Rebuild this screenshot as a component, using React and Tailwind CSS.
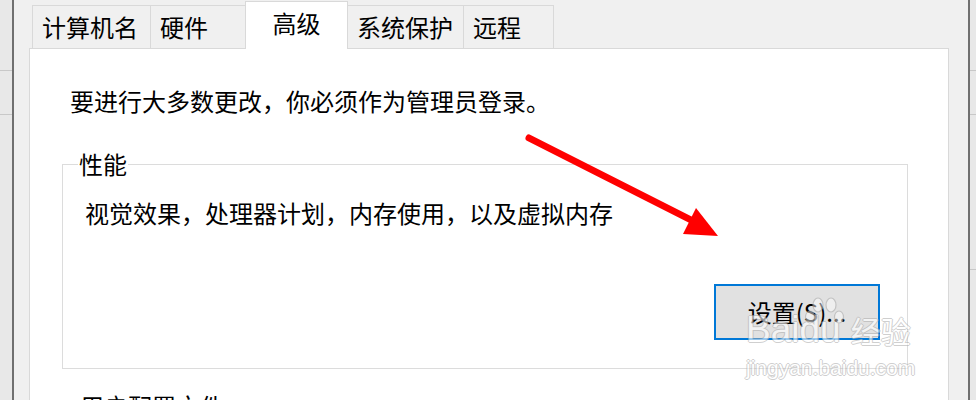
import React from "react";

const font = { fontFamily: '"Noto Sans CJK SC", "Noto Sans", sans-serif' };

function Tab({ label, width, active }) {
  if (active) {
    return (
      <div
        className={`relative z-10 -mb-px -ml-px flex h-[48px] items-center justify-center border border-b-0 border-[#d9d9d9] bg-white pb-[6px] ${width}`}
      >
        {label}
      </div>
    );
  }
  return (
    <div
      className={`-ml-px flex h-[43px] items-center border border-b-0 border-[#d9d9d9] bg-[#f0f0f0] pl-[9px] ${width}`}
    >
      {label}
    </div>
  );
}

function SideStrip({ lines }) {
  return (
    <div className="flex h-full w-full flex-col bg-[#e8e8e8]">
      {lines.map((h, i) => (
        <div key={i} className={`${h} shrink-0 border-b border-[#c8c8c8]`} />
      ))}
    </div>
  );
}

export default function App() {
  return (
    <div
      className="relative flex h-[400px] w-[976px] overflow-hidden bg-[#f0f0f0] text-[24px] leading-[32px] text-black"
      style={font}
    >
      {/* left strip */}
      <div className="h-full w-[12px] shrink-0">
        <SideStrip lines={["h-[71px]", "h-[44px]"]} />
      </div>
      <div className="h-full w-[2px] shrink-0 bg-[#707070]" />

      {/* middle dialog area */}
      <div className="flex h-full w-[954px] shrink-0 flex-col pl-[15px] pr-[19px]">
        <div className="flex h-[48px] shrink-0 items-end pl-[4px]">
          <Tab label="计算机名" width="w-[119px]" />
          <Tab label="硬件" width="w-[96px]" />
          <Tab label="高级" width="w-[103px]" active />
          <Tab label="系统保护" width="w-[117px]" />
          <Tab label="远程" width="w-[91px]" />
        </div>

        <div className="flex flex-1 flex-col border border-b-0 border-[#d9d9d9] bg-white">
          <div className="mt-[36px] h-[32px] pl-[40px]">
            要进行大多数更改，你必须作为管理员登录。
          </div>

          <div className="relative ml-[32px] mt-[47px] flex h-[205px] w-[846px] shrink-0 flex-col border border-[#dcdcdc]">
            <span className="absolute left-[15px] top-[-17px] bg-white px-[1px]">
              性能
            </span>
            <div className="mt-[32px] h-[32px] pl-[22px]">
              视觉效果，处理器计划，内存使用，以及虚拟内存
            </div>
            <div className="mt-[55px] flex justify-end pr-[27px]">
              <button
                className="flex h-[56px] w-[166px] items-center justify-center border-2 border-[#0078d7] bg-[#e1e1e1] text-[24px]"
                style={font}
              >
                设置(S)...
              </button>
            </div>
          </div>

          <div className="mt-[21px] h-[32px] pl-[50px]">用户配置文件</div>
        </div>
      </div>

      {/* right strip */}
      <div className="h-full w-[2px] shrink-0 bg-[#707070]" />
      <div className="h-full w-[6px] shrink-0">
        <SideStrip lines={["h-[71px]", "h-[44px]", "h-[155px]"]} />
      </div>

      {/* red arrow annotation */}
      <svg
        className="pointer-events-none absolute left-0 top-0"
        width="976"
        height="400"
        viewBox="0 0 976 400"
      >
        <line
          x1="529"
          y1="138"
          x2="697"
          y2="223"
          stroke="#ff0000"
          strokeWidth="7"
          strokeLinecap="round"
        />
        <polygon points="696,208 718,236 683,234" fill="#ff0000" />
      </svg>

      {/* watermark */}
      <div className="pointer-events-none absolute left-[746px] top-[308px] flex flex-col text-white opacity-60">
        <div
          className="relative flex items-end"
          style={{ fontFamily: '"Liberation Sans", "Noto Sans CJK SC", sans-serif' }}
        >
          <span className="text-[37px] leading-[44px] [text-shadow:1px_0_#b0b0b0,-1px_0_#b0b0b0,0_1px_#b0b0b0,0_-1px_#b0b0b0]">
            Bai
          </span>
          <span className="relative text-[37px] leading-[44px] [text-shadow:1px_0_#b0b0b0,-1px_0_#b0b0b0,0_1px_#b0b0b0,0_-1px_#b0b0b0]">
            du
            <svg
              className="absolute left-[6px] top-[-12px]"
              width="40"
              height="44"
              viewBox="0 0 40 44"
            >
              <g fill="#ffffff" fillOpacity="0.8" stroke="#b0b0b0" strokeWidth="1.2">
                <ellipse cx="13" cy="9" rx="5" ry="7" />
                <ellipse cx="26" cy="9" rx="5" ry="7" />
                <ellipse cx="5" cy="21" rx="4.5" ry="6" />
                <ellipse cx="34" cy="21" rx="4.5" ry="6" />
              </g>
            </svg>
          </span>
          <span
            className="ml-[10px] text-[30px] leading-[44px] [text-shadow:1px_0_#b0b0b0,-1px_0_#b0b0b0,0_1px_#b0b0b0,0_-1px_#b0b0b0]"
            style={font}
          >
            经验
          </span>
        </div>
        <div
          className="mt-[4px] text-[21px] leading-[24px] [text-shadow:1px_0_#b0b0b0,-1px_0_#b0b0b0,0_1px_#b0b0b0,0_-1px_#b0b0b0]"
          style={{ fontFamily: '"Liberation Sans", sans-serif' }}
        >
          jingyan.baidu.com
        </div>
      </div>
    </div>
  );
}
